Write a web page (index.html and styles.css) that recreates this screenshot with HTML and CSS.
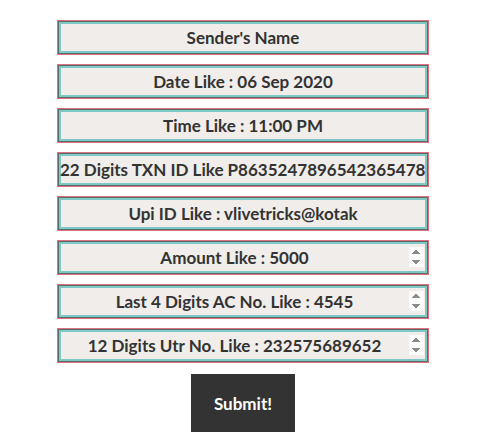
FILE: index.html
```html
<!DOCTYPE html>
<html lang="en">
<head>
    <meta charset="UTF-8">
    <meta name="viewport" content="width=device-width, initial-scale=1.0">
    <title>Payment Receipt</title>
    <link rel="stylesheet" href="styles.css">
</head>
<body>
    <!-- receipt details form -->
    <form class="receipt-form" id="receipt-form">
        <input class="field" type="text" placeholder="Sender's Name">
        <input class="field" type="text" placeholder="Date Like : 06 Sep 2020">
        <input class="field" type="text" placeholder="Time Like : 11:00 PM">
        <input class="field" type="text" placeholder="22 Digits TXN ID Like P86352478965423654789">
        <input class="field" type="text" placeholder="Upi ID Like : vlivetricks@kotak">
        <input class="field" type="number" placeholder="Amount Like : 5000">
        <input class="field" type="number" placeholder="Last 4 Digits AC No. Like : 4545">
        <input class="field" type="number" placeholder="12 Digits Utr No. Like : 232575689652">
        <button class="submit" type="submit">Submit!</button>
    </form>
</body>
</html>
```

FILE: styles.css
```css
body { margin: 0; padding: 20px 0 0; background-color: #fff; font-family: Lato, "Open Sans", sans-serif; }
.receipt-form { width: 372px; margin: 0 0 0 57px; display: flex; flex-direction: column; align-items: center; gap: 9px; }
.field { box-sizing: border-box; width: 100%; height: 35px; margin: 0; padding: 0 2px; background-color: #f0edea; border: 1px solid #e0707c; box-shadow: inset 0 0 0 1px #5a6a6a, inset 0 0 0 3px #7ec9c6; font-family: inherit; font-size: 17px; font-weight: bold; color: #333; text-align: center; outline: none; }
.field::placeholder { color: #333; opacity: 1; }
.field::-webkit-inner-spin-button { opacity: 1; margin-right: 2px; }
.submit { margin-top: 2px; width: 104px; height: 58px; background-color: #333; color: #fff; border: none; font-family: inherit; font-size: 17px; font-weight: bold; cursor: pointer; }
```
